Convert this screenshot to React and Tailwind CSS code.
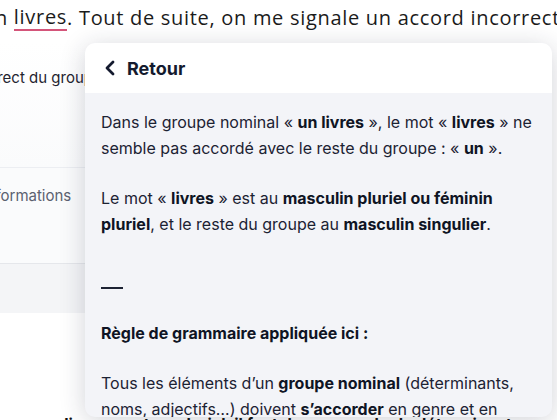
import React from "react";
import { ChevronLeft } from "lucide-react";

export default function App() {
  return (
    <div className="relative w-[557px] h-[420px] overflow-hidden bg-white font-['Inter',sans-serif]">
      {/* Document line behind */}
      <div className="h-[36px] flex items-center whitespace-nowrap font-['Open_Sans',sans-serif] text-[20px] tracking-[0.7px] text-[#1b1b1b] ml-[-18px]">
        <span>un&nbsp;</span>
        <span className="border-b-2 border-[#d4557a] leading-[24px]">livres</span>
        <span className="w-px h-[25px] bg-black"></span>
        <span>. Tout de suite, on me signale un accord incorrect du groupe</span>
      </div>

      {/* Side card behind the popup */}
      <div className="mt-[6px] w-[240px] ml-[-20px] bg-white text-[15px]">
        <div className="h-[126px] pt-[25px] pl-[20px] border-b border-[#eceef2] bg-gradient-to-b from-white to-[#fafbfc]">
          <p className="ml-[-94px] whitespace-nowrap text-[#1f2430]">Accord incorrect du groupe nominal</p>
        </div>
        <div className="h-[96px] pt-[17px] pl-[20px] border-b border-[#e5e7eb] bg-[#fafbfc]">
          <p className="ml-[-65px] whitespace-nowrap text-[#5b6170]">Plus d'informations</p>
        </div>
        <div className="h-[49px] flex items-center pl-[20px] bg-[#f4f5f7]">
          <p className="ml-[-34px] whitespace-nowrap font-bold text-[#1f2430]">Info</p>
        </div>
      </div>
      <p className="absolute left-[-6px] top-[412px] whitespace-nowrap text-[16px] font-bold text-[#111]">
        le nom « livres » est au pluriel, il faut donc accorder le déterminant avec le nom.
      </p>

      {/* Explanation popup */}
      <div className="absolute left-[85px] top-[43px] w-[467px] h-[374px] rounded-[10px] overflow-hidden bg-[#f3f4f8] shadow-[0_4px_26px_rgba(30,35,60,0.2)]">
        <div className="h-[50px] bg-white flex items-center pl-[13px] gap-[5px]">
          <ChevronLeft size={24} strokeWidth={2.8} className="text-[#141a2e]" />
          <span className="text-[18px] font-bold text-[#141a2e]">Retour</span>
        </div>
        <div className="px-[16px] pt-[16px] text-[16px] leading-[26px] text-[#1c2233]">
          <p>
            Dans le groupe nominal « <b className="font-bold text-[#0f1424]">un livres</b> », le mot « <b className="font-bold text-[#0f1424]">livres</b> » ne semble pas accordé avec le reste du groupe : « <b className="font-bold text-[#0f1424]">un</b> ».
          </p>
          <p className="mt-[24px]">
            Le mot « <b className="font-bold text-[#0f1424]">livres</b> » est au <b className="font-bold text-[#0f1424]">masculin pluriel ou féminin pluriel</b>, et le reste du groupe au <b className="font-bold text-[#0f1424]">masculin singulier</b>.
          </p>
          <div className="mt-[50px] w-[22px] h-[1.5px] bg-[#1c2233]"></div>
          <p className="mt-[31px] font-bold text-[#0f1424]">Règle de grammaire appliquée ici :</p>
          <p className="mt-[24px]">
            Tous les éléments d’un <b className="font-bold text-[#0f1424]">groupe nominal</b> (déterminants, noms, adjectifs…) doivent <b className="font-bold text-[#0f1424]">s’accorder</b> en genre et en nombre.
          </p>
        </div>
      </div>
    </div>
  );
}
